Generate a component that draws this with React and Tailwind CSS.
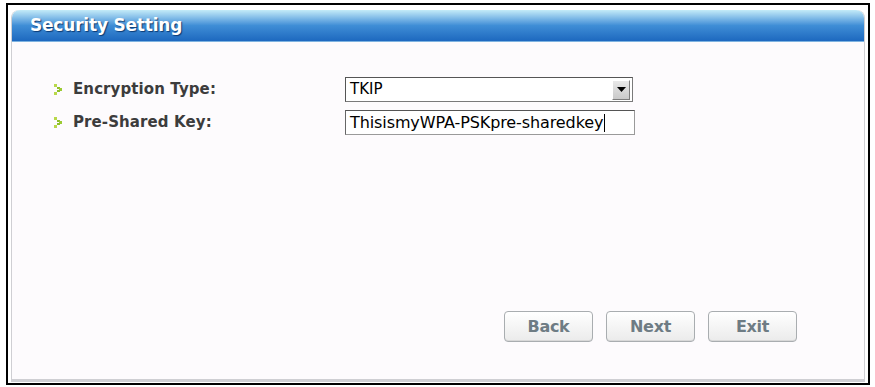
import React from 'react';

function Bullet() {
  // little yellow-green chevron made of dots
  return (
    <svg width="9" height="11" viewBox="0 0 9 11" className="shrink-0">
      <rect x="0" y="0" width="3" height="3" fill="#b8d84a" />
      <rect x="3" y="3" width="3" height="2" fill="#8fbf2a" />
      <rect x="5" y="4" width="3" height="3" fill="#9ccb34" />
      <rect x="3" y="6" width="3" height="2" fill="#8fbf2a" />
      <rect x="0" y="8" width="3" height="3" fill="#b8d84a" />
    </svg>
  );
}

function WizButton({ children }) {
  return (
    <button className="w-[89px] h-[31px] rounded-[4px] border border-[#a9adb0] bg-gradient-to-b from-[#ffffff] to-[#ebebeb] text-[16px] font-bold text-[#6e7c84] tracking-[-0.3px] shadow-[inset_0_-1px_0_#d8d8d8]">
      {children}
    </button>
  );
}

export default function App() {
  return (
    <div className="w-[875px] h-[387px] bg-white pl-[6px] pt-[3px] pr-[5px] pb-[2px]" style={{ fontFamily: '"DejaVu Sans", Verdana, sans-serif' }}>
      <div className="h-full border-2 border-black pt-[5px] px-[3px] pb-[1px]">
        <div className="h-full flex flex-col rounded-t-[8px] border-x border-b-[3px] border-[#cfcfd3] bg-[#fdfbfd]">
          {/* Title bar */}
          <div className="h-[32px] rounded-t-[8px] bg-gradient-to-b from-[#c4ebf8] via-[#3f8ed6] to-[#1d68bf] flex items-center pl-[18px] border-b border-[#7eb3e0]">
            <span className="text-[17px] font-bold text-white tracking-[-0.2px] [text-shadow:1px_1px_1px_#0b3a73]">Security Setting</span>
          </div>

          {/* Fields */}
          <div className="flex flex-col gap-[8px] pt-[35px] pl-[42px]">
            <div className="flex items-center">
              <div className="w-[291px] flex items-center gap-[10px]">
                <Bullet />
                <span className="text-[15px] font-bold text-[#3c3c3c] tracking-[0.1px]">Encryption Type:</span>
              </div>
              <div className="w-[288px] h-[25px] flex items-center justify-between border border-[#7a7a7a] border-t-[#555] border-l-[#555] bg-white pl-[4px] pr-[2px]">
                <span className="text-[15px] text-black">TKIP</span>
                <span className="w-[18px] h-[20px] flex items-center justify-center bg-gradient-to-b from-[#e8e8e8] to-[#c9c9c9] border border-t-white border-l-white border-r-[#7d7d7d] border-b-[#7d7d7d]">
                  <svg width="9" height="5" viewBox="0 0 9 5"><path d="M0 0h9L4.5 5z" fill="#000" /></svg>
                </span>
              </div>
            </div>
            <div className="flex items-center">
              <div className="w-[291px] flex items-center gap-[10px]">
                <Bullet />
                <span className="text-[15px] font-bold text-[#3c3c3c] tracking-[0.1px]">Pre-Shared Key:</span>
              </div>
              <div className="w-[290px] h-[25px] flex items-center border border-[#9a9a9a] border-t-[#555] border-l-[#666] bg-white pl-[4px]">
                <span className="text-[16px] text-black tracking-[-0.1px]">ThisismyWPA-PSKpre-sharedkey</span>
                <span className="w-px h-[18px] bg-black ml-[1px]" />
              </div>
            </div>
          </div>

          {/* Buttons */}
          <div className="mt-auto flex justify-end gap-[13px] pr-[67px] pb-[37px]">
            <WizButton>Back</WizButton>
            <WizButton>Next</WizButton>
            <WizButton>Exit</WizButton>
          </div>
        </div>
      </div>
    </div>
  );
}
